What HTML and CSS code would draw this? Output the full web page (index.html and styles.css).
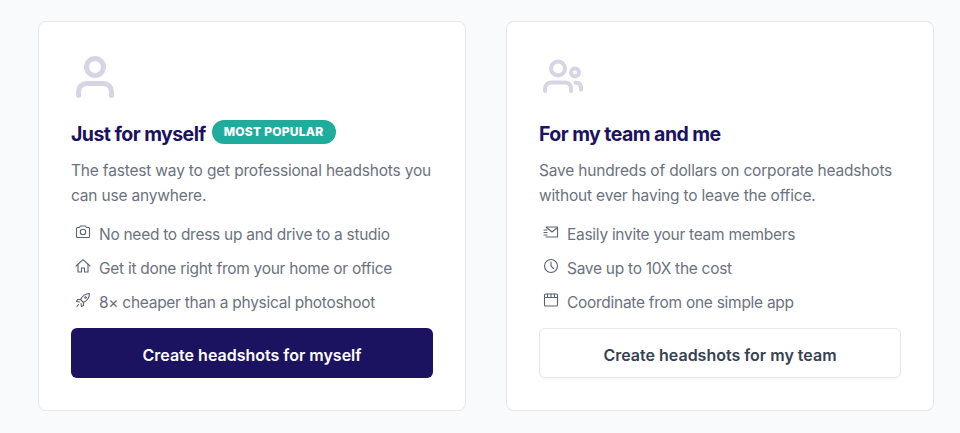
FILE: index.html
```html
<!DOCTYPE html>
<html lang="en">
<head>
  <meta charset="UTF-8">
  <title>Choose a plan</title>
  <link rel="stylesheet" href="styles.css">
</head>
<body>
  <main class="cards">
    <!-- Individual card -->
    <section class="card">
      <svg class="card-icon" viewBox="0 0 48 48" fill="none" stroke="#d6d5e3" stroke-width="5" stroke-linecap="round" stroke-linejoin="round">
        <circle cx="24" cy="15" r="8.500"/>
        <path d="M7.500 43.500v-4a8 8 0 0 1 8-8h17a8 8 0 0 1 8 8v4"/>
      </svg>
      <div class="card-title">
        <h2>Just for myself</h2>
        <span class="badge">MOST POPULAR</span>
      </div>
      <p class="card-text">The fastest way to get professional headshots you can use anywhere.</p>
      <ul class="features">
        <li>
          <svg viewBox="0 0 16 16" fill="none" stroke="#5b6270" stroke-width="1.100" stroke-linejoin="round"><path d="M1.500 4.500a1 1 0 0 1 1-1h2l1-1.500h5l1 1.500h2a1 1 0 0 1 1 1v8a1 1 0 0 1-1 1h-11a1 1 0 0 1-1-1z"/><circle cx="8" cy="8" r="2.700"/></svg>
          No need to dress up and drive to a studio
        </li>
        <li>
          <svg viewBox="0 0 16 16" fill="none" stroke="#5b6270" stroke-width="1.100" stroke-linecap="round" stroke-linejoin="round"><path d="M1 8l7-6.300L15 8"/><path d="M3 6.500V14h3.500v-4h3v4H13V6.500"/></svg>
          Get it done right from your home or office
        </li>
        <li>
          <svg viewBox="0 0 16 16" fill="none" stroke="#5b6270" stroke-width="1.100" stroke-linecap="round" stroke-linejoin="round"><path d="M14.500 1.500c-4 .2-7 2-9 6l3 3c4-2 5.800-5 6-9z"/><path d="M5.500 7.500H2.500L1.500 9.500l3 .5M8.500 10.500v3l-2 1-.5-3"/><path d="M3.500 12.500l-1.500 2"/><circle cx="10.500" cy="5.500" r=".8"/></svg>
          8× cheaper than a physical photoshoot
        </li>
      </ul>
      <a href="#" class="btn btn-primary">Create headshots for myself</a>
    </section>

    <!-- Team card -->
    <section class="card">
      <svg class="card-icon" viewBox="0 0 48 48" fill="none" stroke="#d6d5e3" stroke-width="4" stroke-linecap="round" stroke-linejoin="round">
        <circle cx="19" cy="16.500" r="7"/>
        <circle cx="36" cy="20.500" r="4"/>
        <path d="M6 39v-2.500a6 6 0 0 1 6-6h14a6 6 0 0 1 6 6V39"/>
        <path d="M36.500 30.800h1.300a4.500 4.500 0 0 1 4.200 4.500v2.200"/>
      </svg>
      <div class="card-title">
        <h2>For my team and me</h2>
      </div>
      <p class="card-text">Save hundreds of dollars on corporate headshots without ever having to leave the office.</p>
      <ul class="features">
        <li>
          <svg viewBox="0 0 16 16" fill="none" stroke="#5b6270" stroke-width="1.100" stroke-linecap="round" stroke-linejoin="round"><path d="M3 3h11.500v10H3"/><path d="M3.500 3.500L9 8l5.500-4.500"/><path d="M1 6h3M1 8.500h3M1 11h3"/></svg>
          Easily invite your team members
        </li>
        <li>
          <svg viewBox="0 0 16 16" fill="none" stroke="#5b6270" stroke-width="1.100" stroke-linecap="round" stroke-linejoin="round"><circle cx="8" cy="8" r="6.500"/><path d="M8 4v4l2.500 2.500"/></svg>
          Save up to 10X the cost
        </li>
        <li>
          <svg viewBox="0 0 16 16" fill="none" stroke="#5b6270" stroke-width="1.100" stroke-linecap="round" stroke-linejoin="round"><rect x="1.500" y="2" width="13" height="12" rx="1"/><path d="M1.500 5.500h13M4.500 2v3.500M8 2v3.500M11.500 2v3.500"/></svg>
          Coordinate from one simple app
        </li>
      </ul>
      <a href="#" class="btn btn-secondary">Create headshots for my team</a>
    </section>
  </main>
</body>
</html>
```

FILE: styles.css
```css
* {
  box-sizing: border-box;
}
body {
  margin: 0;
  background-color: #f9fafb;
  font-family: Inter, "Noto Sans", sans-serif;
  color: #6b7280;
}
.cards {
  display: grid;
  grid-template-columns: 428px 428px;
  gap: 40px;
  padding: 21px 0 0 38px;
}
.card {
  display: flex;
  flex-direction: column;
  height: 390px;
  padding: 30px 32px 32px;
  background-color: #fff;
  border: 1px solid #e5e7eb;
  border-radius: 8px;
}
.card-icon {
  display: block;
  width: 48px;
  height: 48px;
}
.card-title {
  display: flex;
  align-items: center;
  gap: 6px;
  height: 28px;
  margin-top: 20px;
}
.card-title h2 {
  margin: 0;
  font-size: 19.500px;
  font-weight: 700;
  letter-spacing: -0.55px;
  color: #1b1260;
}
.badge {
  padding: 0 12px;
  height: 24px;
  line-height: 24px;
  margin-top: -4px;
  border-radius: 12px;
  background-color: #20ac9c;
  color: #fff;
  font-size: 12px;
  font-weight: 800;
  letter-spacing: 0.25px;
}
.card-text {
  margin: 10px 0 0;
  font-size: 15.500px;
  line-height: 25px;
  letter-spacing: -0.18px;
}
.features {
  margin: 9px 0 0;
  padding: 0;
  list-style: none;
}
.features li {
  display: flex;
  align-items: center;
  gap: 8px;
  height: 34px;
  font-size: 15.500px;
  letter-spacing: -0.28px;
}
.features svg {
  flex: none;
  width: 16px;
  height: 16px;
  margin-top: -4px;
  margin-left: 4px;
}
.btn {
  display: flex;
  align-items: center;
  justify-content: center;
  height: 50px;
  margin-top: 9px;
  padding-top: 3px;
  border-radius: 6px;
  font-size: 16px;
  font-weight: 560;
  text-decoration: none;
}
.btn-primary {
  background-color: #1b1260;
  color: #fff;
}
.btn-secondary {
  background-color: #fff;
  border: 1px solid #e5e7eb;
  box-shadow: 0 1px 2px rgba(0,0,0,0.05);
  color: #374151;
}
```
